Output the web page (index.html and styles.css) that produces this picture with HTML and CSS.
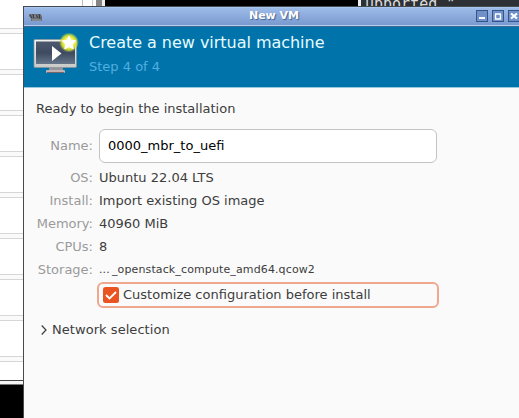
FILE: index.html
```html
<!DOCTYPE html>
<html lang="en">
<head>
<meta charset="utf-8">
<title>New VM</title>
<link rel="stylesheet" href="styles.css">
</head>
<body>
<div class="desktop">
  <div class="sheet"><i></i><i></i><i></i><i></i><i></i><i></i><i></i><i></i><i></i></div>
  <div class="sheet-edge"></div>
  <div class="console"></div>
  <div class="terminal">upported "</div>
  <main class="window">
    <div class="titlebar">
      <svg class="app-icon" width="14" height="9" viewBox="0 0 14 9"><path d="M0 1h12v1l1 1v5H2V6L0 3z" fill="#6d7078"/><path d="M1 2l2 3M4 1l1 4M7 2l2 3M10 1l1 5" stroke="#34373f" fill="none"/><path d="M3 7h9M5 3h2" stroke="#9b9da3" fill="none"/></svg>
      <span class="caption">New VM</span>
      <div class="controls">
        <span><svg width="10" height="10" viewBox="0 0 10 10"><path d="M2 7h6" stroke="#fff" stroke-width="2"/></svg></span>
        <span><svg width="10" height="10" viewBox="0 0 10 10"><path d="M2 3h6M2.5 3v5h5V3" fill="none" stroke="#fff" stroke-width="1.4"/></svg></span>
        <span><svg width="10" height="10" viewBox="0 0 10 10"><path d="M2 2.5l6 5M8 2.5l-6 5" stroke="#fff" stroke-width="2.2"/></svg></span>
      </div>
    </div>
    <header class="banner">
      <svg class="vm-icon" width="48" height="44" viewBox="0 0 48 44">
        <defs>
          <linearGradient id="screen" x1="0" y1="0" x2="0" y2="1"><stop offset="0" stop-color="#4c596e"/><stop offset=".5" stop-color="#3d4a60"/><stop offset="1" stop-color="#66758a"/></linearGradient>
          <linearGradient id="frame" x1="0" y1="0" x2="0" y2="1"><stop offset="0" stop-color="#f2f2f0"/><stop offset="1" stop-color="#c9c9c7"/></linearGradient>
          <radialGradient id="glow"><stop offset=".45" stop-color="#f6f65a"/><stop offset=".72" stop-color="#dfe52b" stop-opacity=".9"/><stop offset="1" stop-color="#c5dc38" stop-opacity="0"/></radialGradient>
        </defs>
        <path d="M16 35h14v3H16z" fill="#93959b"/><rect x="13" y="38" width="19" height="3" rx="1" fill="#c4b2b3"/><path d="M14 40.5h17" stroke="#77646c"/>
        <rect x="1" y="7.500" width="42.500" height="28" rx="1" fill="url(#frame)" stroke="#8d9297" stroke-width=".7"/>
        <rect x="3" y="9.500" width="39" height="22.500" fill="url(#screen)"/>
        <path d="M19 14v15l9.500-7.500z" fill="#fff"/>
        <circle cx="36" cy="10.500" r="10" fill="url(#glow)"/>
        <path d="M36 4l2 4.300 4.700.6-3.400 3.300.9 4.700-4.200-2.300-4.200 2.300.9-4.700-3.400-3.300 4.700-.6z" fill="#fff" stroke="#fff" stroke-linejoin="round"/>
      </svg>
      <div><h1>Create a new virtual machine</h1><p>Step 4 of 4</p></div>
    </header>
    <section class="content">
      <p class="ready">Ready to begin the installation</p>
      <div class="form">
        <label class="key" for="name">Name:</label><input id="name" value="0000_mbr_to_uefi">
        <span class="key">OS:</span><span>Ubuntu 22.04 LTS</span>
        <span class="key">Install:</span><span>Import existing OS image</span>
        <span class="key">Memory:</span><span>40960 MiB</span>
        <span class="key">CPUs:</span><span>8</span>
        <span class="key">Storage:</span><span class="path"><span class="dots">...</span>_openstack_compute_amd64.qcow2</span>
      </div>
      <div class="check">
        <svg width="16" height="16" viewBox="0 0 16 16"><rect width="16" height="16" rx="2.500" fill="#e95420"/><path d="M3 8l3.500 3.500L13 5" fill="none" stroke="#fff" stroke-width="1.800"/></svg>
        <span>Customize configuration before install</span>
      </div>
      <div class="expander">
        <svg width="6" height="10" viewBox="0 0 6 10"><path d="M.7.500L5 5 .7 9.500" fill="none" stroke="#3d3d3d" stroke-width="1.200"/></svg>
        <span>Network selection</span>
      </div>
    </section>
  </main>
</div>
</body>
</html>
```
FILE: styles.css
```css
* { box-sizing: border-box; }
body { margin: 0; overflow: hidden; font: 13px/16px "DejaVu Sans", sans-serif; color: #3d3d3d; }
h1, p { margin: 0; font-weight: normal; }
svg { display: block; flex: none; }
.desktop { position: relative; width: 519px; height: 418px; background: #000; overflow: hidden; }
.sheet { position: absolute; left: 0; top: 0; width: 103px; height: 380px; padding-top: 28px; background: #fff; display: grid; grid-auto-rows: 41px; }
.sheet i { display: block; height: 6px; background: #fafafa; border: solid #d6d6d6; border-width: 1px 0; }
.sheet-edge { position: absolute; left: 0; top: 380px; width: 24px; height: 5px; background: #f4f4f4; border: solid #444; border-width: 1px 0; border-bottom-color: #777; }
.console { position: absolute; left: 82px; top: 0; width: 24px; height: 7px; background: linear-gradient(90deg, #bbb 0 1px, #fff 1px 10px, #ccc 10px 11px, #fff 11px 14px, #858585 14px 20px, #eee 20px 23px, #000 23px); }
.terminal { position: absolute; left: 358px; top: 0; width: 161px; height: 17px; padding-left: 4px; background: #2d3034; border-left: 3px solid #eee; font: 15px/8px "DejaVu Sans Mono", monospace; color: #ddd; white-space: pre; }
.window { position: absolute; left: 23px; top: 6px; width: 520px; height: 420px; background: #fafafa; border: 1px solid #454950; }
.titlebar { height: 20px; display: flex; align-items: center; padding: 0 22px 0 5px; background: linear-gradient(#9dbbe8, #7798ce); border-top: 1px solid #a9c7ee; border-bottom: 1px solid #426994; box-shadow: inset 0 -1px #b1cdef; }
.caption { flex: 1; text-align: center; padding-left: 29px; font-weight: bold; font-size: 11px; line-height: 14px; padding-bottom: 3px; color: #fff; text-shadow: 1px 1px 1px #456392; }
.controls { display: flex; gap: 4px; padding-bottom: 3px; }
.controls span { width: 12px; height: 12px; border: 1px solid #33558b; background: #6f91c7; }
.banner { height: 61px; display: flex; gap: 8px; padding: 6px 0 0 9px; background: #0073ab; border-bottom: 1px solid #99c7df; color: #e5fcff; }
.vm-icon { margin-top: -1px; }
.banner h1 { font-size: 16px; line-height: 20px; letter-spacing: -.03px; }
.banner p { margin-top: 5px; line-height: 18px; color: #52afe0; }
.content { padding: 13px 12px 0; }
.form { display: grid; grid-template-columns: 57px 338px; grid-template-rows: 34px repeat(5, 16px); gap: 7px 6px; margin-top: 12px; align-items: center; }
.key { text-align: right; color: #9a9a9a; white-space: nowrap; }
.form input { width: 338px; height: 34px; padding: 0 8px 1px; border: 1px solid #c3c3c3; border-radius: 6px; background: #fff; font: inherit; color: #000; outline: 0; }
.path { font-size: 11px; letter-spacing: .12px; white-space: nowrap; }
.dots { display: inline-block; width: 13px; }
.check { width: 342px; height: 26px; margin: 4px 0 0 61px; padding-left: 4px; display: flex; align-items: center; gap: 4px; border: 2px solid #efa78d; border-radius: 6px; }
.check span { padding-bottom: 1px; }
.expander { display: flex; align-items: center; gap: 5px; margin: 14px 0 0 5px; letter-spacing: .05px; }
```
